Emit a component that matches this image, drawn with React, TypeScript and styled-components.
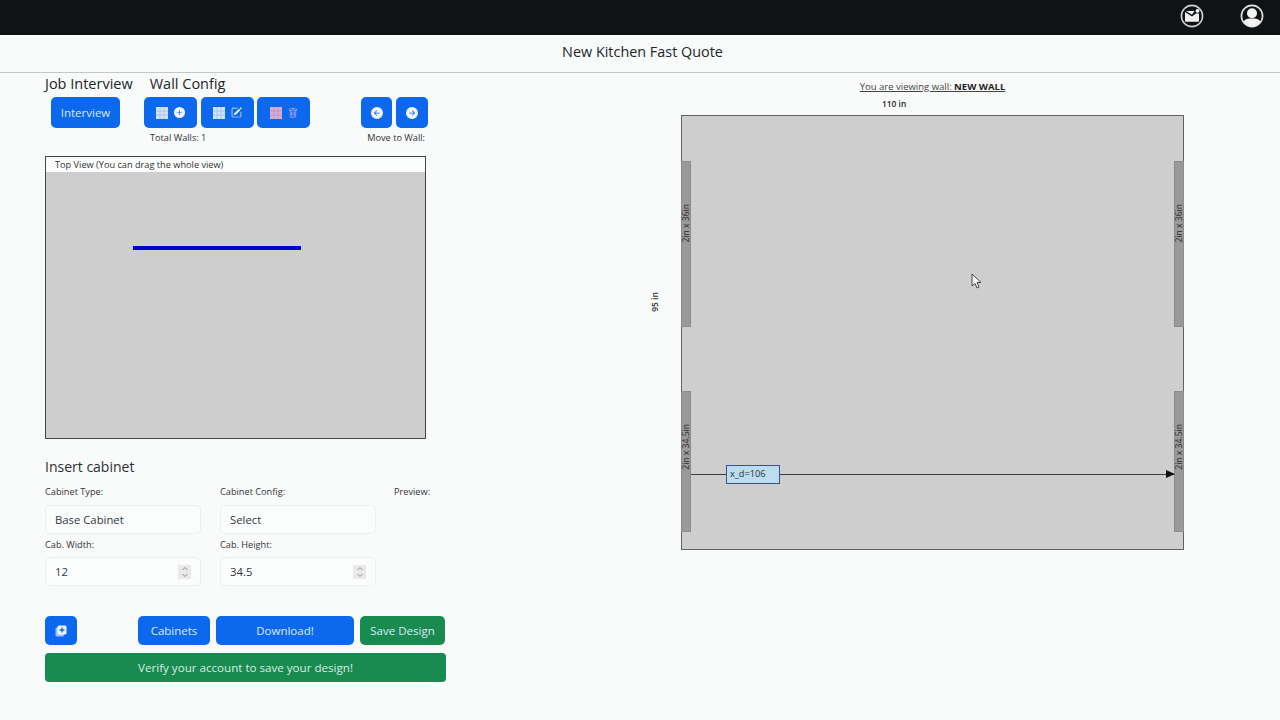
import React from 'react';
import styled, { createGlobalStyle } from 'styled-components';
import { BsArrowLeftCircleFill, BsArrowRightCircleFill, BsPlusCircleFill, BsPencilSquare, BsTrash } from 'react-icons/bs';

const GlobalStyle = createGlobalStyle`
  html, body {
    margin: 0;
    padding: 0;
    background: #f9fafa;
    font-family: "Open Sans", "Noto Sans", "Liberation Sans", sans-serif;
    color: #212529;
  }
  * { box-sizing: border-box; }
`;

const Page = styled.div`
  width: 1280px;
  height: 720px;
  overflow: hidden;
  background: #f9fafa;
`;

const TopBar = styled.div`
  height: 35px;
  background: #0f1316;
  display: flex;
  align-items: center;
  justify-content: flex-end;
  gap: 36px;
  padding: 0 16px 3px 0;
`;

const TitleBar = styled.div`
  height: 38px;
  border-bottom: 1px solid #c4c6c8;
  display: flex;
  align-items: center;
  justify-content: center;
  font-size: 14.4px;
  padding: 0 0 4px 5px;
`;

const Main = styled.div`
  display: flex;
`;

const LeftColumn = styled.div`
  width: 401px;
  margin-left: 45px;
  flex: none;
`;

const HeadingRow = styled.div`
  display: flex;
  gap: 17px;
  height: 24px;
  padding-top: 1px;
  font-size: 14.5px;
  line-height: 20px;
`;

const Toolbar = styled.div`
  display: flex;
  margin-left: 6px;
  height: 31px;
`;

const Button = styled.button<{ $w: number; $green?: boolean; $ml?: number; $gap?: number }>`
  width: ${(p) => p.$w}px;
  margin-left: ${(p) => p.$ml || 0}px;
  height: 100%;
  flex: none;
  border: none;
  border-radius: 5px;
  background: ${(p) => (p.$green ? '#198a50' : '#0c69ee')};
  color: #dfe9f7;
  font-family: inherit;
  font-size: 11.5px;
  display: flex;
  align-items: center;
  justify-content: center;
  gap: ${(p) => p.$gap || 0}px;
  padding: 0;
`;

const Captions = styled.div`
  display: flex;
  justify-content: space-between;
  height: 28px;
  padding: 3px 21px 0 105px;
  font-size: 9.2px;
  line-height: 14px;
  color: #333;
`;

const TopView = styled.div`
  width: 381px;
  height: 283px;
  border: 1px solid #444;
  background: #cecece;
  position: relative;
`;

const TopViewTitle = styled.div`
  height: 15px;
  background: #fbfcfc;
  padding-left: 9px;
  font-size: 9.2px;
  line-height: 15px;
  color: #333;
`;

const WallLine = styled.div`
  position: absolute;
  left: 87px;
  top: 89px;
  width: 168px;
  height: 4px;
  background: #0000cd;
`;

const SectionTitle = styled.div`
  margin-top: 18px;
  height: 28px;
  font-size: 14px;
  line-height: 20px;
  color: #2b2f33;
`;

const FieldRow = styled.div<{ $mt?: number }>`
  display: grid;
  grid-template-columns: 175px 174px 1fr;
  margin-top: ${(p) => p.$mt || 0}px;
`;

const FieldLabel = styled.div`
  height: 14px;
  margin-bottom: 5px;
  font-size: 9.2px;
  line-height: 14px;
  color: #333;
`;

const Field = styled.div`
  width: 156px;
  height: 29px;
  background: #fbfcfc;
  border: 1px solid #eceef0;
  border-radius: 5px;
  display: flex;
  align-items: center;
  justify-content: space-between;
  padding: 0 9px;
  font-size: 11.3px;
  color: #33383c;
`;

const Spinner = styled.span`
  width: 13px;
  height: 14px;
  background: #e9e9e9;
  display: flex;
  align-items: center;
  justify-content: center;
`;

const ActionRow = styled.div`
  display: flex;
  height: 29px;
  margin-top: 30px;
`;

const VerifyBar = styled.div`
  width: 401px;
  height: 29px;
  margin-top: 8px;
  border-radius: 4px;
  background: #198a50;
  color: #dbece3;
  font-size: 11.6px;
  display: flex;
  align-items: center;
  justify-content: center;
`;

const RightColumn = styled.div`
  margin-left: 204px;
  width: 534px;
  position: relative;
`;

const WallHeading = styled.div`
  height: 14px;
  margin: 7px 0 0 31px;
  width: 503px;
  text-align: center;
  font-size: 9.5px;
  line-height: 14px;
  color: #444;
  text-decoration: underline;

  b {
    color: #1c1f22;
    font-weight: 700;
  }
`;

const WidthLabel = styled.div`
  height: 21px;
  padding: 4px 0 0 232px;
  font-size: 8.4px;
  line-height: 12px;
  font-weight: 600;
  color: #222;
`;

const HeightLabel = styled.div`
  position: absolute;
  left: -5px;
  top: 223px;
  transform: rotate(-90deg);
  font-size: 8.4px;
  line-height: 12px;
  font-weight: 600;
  color: #333;
`;

const WallCanvas = styled.div`
  margin-left: 31px;
  width: 503px;
  height: 435px;
  border: 1px solid #606365;
  background: #cecece;
  position: relative;
`;

const Opening = styled.div<{ $right?: boolean; $top: number; $h: number }>`
  position: absolute;
  ${(p) => (p.$right ? 'right: -1px;' : 'left: -1px;')}
  top: ${(p) => p.$top}px;
  width: 10px;
  height: ${(p) => p.$h}px;
  background: #9a9a9a;
  border: 1px solid #8c8c8c;
  display: flex;
  justify-content: center;
`;

const OpeningText = styled.span<{ $pt: number }>`
  writing-mode: vertical-rl;
  transform: rotate(180deg);
  font-size: 8.6px;
  line-height: 10px;
  height: max-content;
  margin-top: ${(p) => p.$pt}px;
  white-space: nowrap;
  color: #2a2a2a;
`;

const Dimension = styled.div`
  position: absolute;
  left: 9px;
  right: 9px;
  top: 358px;
  height: 1px;
  background: #3d3d3d;
`;

const ArrowHead = styled.div`
  position: absolute;
  right: -1px;
  top: -4px;
  border-left: 9px solid #111;
  border-top: 4.5px solid transparent;
  border-bottom: 4.5px solid transparent;
`;

const DimensionTag = styled.div`
  position: absolute;
  left: 44px;
  top: 349px;
  width: 54px;
  height: 19px;
  background: #bcdcf0;
  border: 1px solid #3f4f8f;
  padding-left: 3px;
  font-size: 9.2px;
  line-height: 16px;
  color: #22323c;
`;

const Cursor = styled.svg`
  position: absolute;
  left: 289px;
  top: 157px;
`;

const MailBadge = () => (
  <svg width="24" height="24" viewBox="0 0 24 24" fill="none">
    <circle cx="12" cy="12" r="10.6" stroke="#cfcfcf" strokeWidth="1.6" />
    <path d="M5 8 L12 12.5 L16 9.5 L19 9.5 V17 a0.8 0.8 0 0 1-0.8 0.8 H5.8 a0.8 0.8 0 0 1-0.8-0.8 Z" fill="#efefef" />
    <path d="M6 7 H14.5 L12 10.8 Z" fill="#efefef" />
    <circle cx="17.5" cy="6.8" r="1.9" fill="#ffffff" />
  </svg>
);

const UserBadge = () => (
  <svg width="24" height="24" viewBox="0 0 24 24" fill="none">
    <circle cx="12" cy="12" r="10.6" stroke="#e4e4e4" strokeWidth="1.6" />
    <circle cx="12" cy="9.2" r="5" fill="#f4f4f4" />
    <path d="M3.4 17.5 C5 14.8 8 14.4 12 14.4 C16 14.4 19 14.8 20.6 17.5 C18.8 20.6 15.6 22.4 12 22.4 C8.4 22.4 5.2 20.6 3.4 17.5 Z" fill="#f4f4f4" />
  </svg>
);

const WallIcon = ({ tile, line }: { tile: string; line: string }) => (
  <svg width="12" height="12" viewBox="0 0 12 12">
    <rect width="12" height="12" fill={tile} />
    <path d="M0 4 H12 M0 8 H12 M4 0 V12 M8 0 V12" stroke={line} strokeWidth="0.8" />
  </svg>
);

const StepIcon = () => (
  <svg width="8" height="14" viewBox="0 0 8 14" fill="none" stroke="#8a8f94" strokeWidth="1">
    <path d="M1.5 5 L4 2.5 L6.5 5" />
    <path d="M1.5 9 L4 11.5 L6.5 9" />
  </svg>
);

const CopyIcon = () => (
  <svg width="12" height="12" viewBox="0 0 12 12">
    <rect x="0.5" y="2.5" width="8.5" height="9" rx="1.5" fill="#9dc2f7" />
    <rect x="2.5" y="0.5" width="9" height="9" rx="1.5" fill="#f2f6fc" />
    <path d="M7 2.5 V7.5 M4.5 5 H9.5" stroke="#0c69ee" strokeWidth="1.4" />
  </svg>
);

const NumberField = ({ value }: { value: string }) => (
  <Field>
    {value}
    <Spinner>
      <StepIcon />
    </Spinner>
  </Field>
);

export default function App() {
  return (
    <Page>
      <GlobalStyle />
      <TopBar>
        <MailBadge />
        <UserBadge />
      </TopBar>
      <TitleBar>New Kitchen Fast Quote</TitleBar>
      <Main>
        <LeftColumn>
          <HeadingRow>
            <span>Job Interview</span>
            <span>Wall Config</span>
          </HeadingRow>
          <Toolbar>
            <Button $w={69}>Interview</Button>
            <Button $w={53} $ml={24} $gap={6}>
              <WallIcon tile="#d3e3f8" line="#9cc0f2" />
              <BsPlusCircleFill size={11} color="#f3f7fd" />
            </Button>
            <Button $w={53} $ml={4} $gap={6}>
              <WallIcon tile="#d3e3f8" line="#9cc0f2" />
              <BsPencilSquare size={11} color="#f3f7fd" />
            </Button>
            <Button $w={53} $ml={3} $gap={6}>
              <WallIcon tile="#d9aecf" line="#b98fd0" />
              <BsTrash size={10} color="#d2b4dc" />
            </Button>
            <Button $w={31} $ml={51}>
              <BsArrowLeftCircleFill size={12} color="#f3f7fd" />
            </Button>
            <Button $w={32} $ml={4}>
              <BsArrowRightCircleFill size={12} color="#f3f7fd" />
            </Button>
          </Toolbar>
          <Captions>
            <span>Total Walls: 1</span>
            <span>Move to Wall:</span>
          </Captions>
          <TopView>
            <TopViewTitle>Top View (You can drag the whole view)</TopViewTitle>
            <WallLine />
          </TopView>
          <SectionTitle>Insert cabinet</SectionTitle>
          <FieldRow>
            <FieldLabel>Cabinet Type:</FieldLabel>
            <FieldLabel>Cabinet Config:</FieldLabel>
            <FieldLabel>Preview:</FieldLabel>
          </FieldRow>
          <FieldRow $mt={1}>
            <Field>Base Cabinet</Field>
            <Field>Select</Field>
          </FieldRow>
          <FieldRow $mt={4}>
            <FieldLabel>Cab. Width:</FieldLabel>
            <FieldLabel>Cab. Height:</FieldLabel>
          </FieldRow>
          <FieldRow>
            <NumberField value="12" />
            <NumberField value="34.5" />
          </FieldRow>
          <ActionRow>
            <Button $w={32}>
              <CopyIcon />
            </Button>
            <Button $w={72} $ml={61}>Cabinets</Button>
            <Button $w={138} $ml={6}>Download!</Button>
            <Button $w={85} $ml={6} $green>Save Design</Button>
          </ActionRow>
          <VerifyBar>Verify your account to save your design!</VerifyBar>
        </LeftColumn>
        <RightColumn>
          <WallHeading>
            You are viewing wall: <b>NEW WALL</b>
          </WallHeading>
          <WidthLabel>110 in</WidthLabel>
          <HeightLabel>95 in</HeightLabel>
          <WallCanvas>
            <Opening $top={45} $h={166}>
              <OpeningText $pt={42}>2in x 36in</OpeningText>
            </Opening>
            <Opening $right $top={45} $h={166}>
              <OpeningText $pt={42}>2in x 36in</OpeningText>
            </Opening>
            <Opening $top={275} $h={141}>
              <OpeningText $pt={32}>2in x 34.5in</OpeningText>
            </Opening>
            <Opening $right $top={275} $h={141}>
              <OpeningText $pt={32}>2in x 34.5in</OpeningText>
            </Opening>
            <Dimension>
              <ArrowHead />
            </Dimension>
            <DimensionTag>x_d=106</DimensionTag>
            <Cursor width="11" height="16" viewBox="0 0 11 16">
              <path d="M1 1 V13 L4 10.5 L6 15 L8 14 L6 9.5 H10 Z" fill="#f4f4f4" stroke="#333" strokeWidth="0.9" />
            </Cursor>
          </WallCanvas>
        </RightColumn>
      </Main>
    </Page>
  );
}
